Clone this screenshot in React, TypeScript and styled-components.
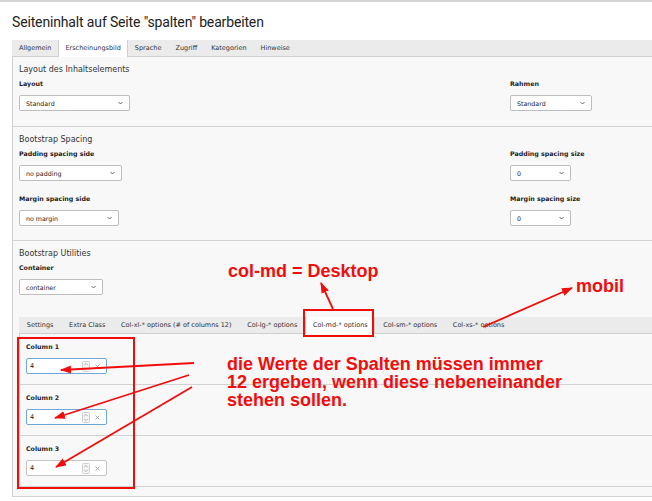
import React from "react";
import styled, { createGlobalStyle } from "styled-components";

const GlobalStyle = createGlobalStyle`
  html, body {
    margin: 0;
    padding: 0;
    background: #fff;
  }
  body {
    font-family: "DejaVu Sans", Verdana, sans-serif;
    color: #222;
  }
`;

const Page = styled.div`
  position: relative;
  width: 652px;
  height: 501px;
  overflow: hidden;
  background: #fff;
`;

const TopRule = styled.div`
  height: 2px;
  background: #d4d4d4;
`;

const Title = styled.h1`
  margin: 11px 0 9px 12px;
  font-family: Roboto, "Liberation Sans", sans-serif;
  font-size: 14px;
  letter-spacing: -0.15px;
  line-height: 18px;
  font-weight: 400;
  color: #222;
`;

const TabBar = styled.div<{ $inset?: boolean }>`
  display: flex;
  height: 17px;
  box-sizing: border-box;
  margin-left: ${p => (p.$inset ? "0" : "12px")};
  background: #ebebeb;
  border-bottom: 1px solid #cfcfcf;
`;

const Tab = styled.div<{ $active?: boolean; $pad?: number }>`
  padding: 0 ${p => p.$pad ?? 7}px;
  height: 17px;
  box-sizing: border-box;
  font-size: 6.5px;
  line-height: 16px;
  color: #333;
  white-space: nowrap;
  background: ${p => (p.$active ? "#fff" : "transparent")};
  box-shadow: ${p => (p.$active ? "inset 1px 0 #cfcfcf, inset -1px 0 #cfcfcf" : "none")};
`;

const Panel = styled.div`
  margin-left: 12px;
  border-left: 1px solid #cfcfcf;
  background: #f8f8f8;
`;

const Section = styled.div<{ $bottom?: number }>`
  padding: 8px 0 ${p => p.$bottom ?? 15}px 6px;
  border-bottom: 1px solid #d2d2d2;
`;

const SectionTitle = styled.div`
  font-size: 8px;
  line-height: 10px;
  margin-bottom: 4px;
  color: #333;
`;

const FieldGrid = styled.div`
  display: grid;
  grid-template-columns: 491px 1fr;
  row-gap: 13px;
`;

const Field = styled.div`
  display: flex;
  flex-direction: column;
  align-items: flex-start;
`;

const Label = styled.div`
  font-size: 6.3px;
  line-height: 9px;
  font-weight: 700;
  margin-bottom: 7px;
  color: #1e1e1e;
`;

const SelectBox = styled.div<{ $w: number }>`
  width: ${p => p.$w}px;
  height: 16px;
  box-sizing: border-box;
  display: flex;
  align-items: center;
  justify-content: space-between;
  padding: 0 6px;
  background: #fff;
  border: 1px solid #bdbdbd;
  border-radius: 2px;
  font-size: 6.3px;
  color: #222;
`;

const InnerTabs = styled.div`
  margin-top: 22px;
`;

const InnerPanel = styled.div`
  border-left: 1px solid #d2d2d2;
`;

const ColumnRow = styled.div`
  padding: 8px 0 10px 6px;
  border-bottom: 1px solid #d2d2d2;
`;

const NumberBox = styled.div<{ $focus?: boolean }>`
  width: 81px;
  height: 16px;
  box-sizing: border-box;
  display: flex;
  align-items: center;
  padding: 0 6px 0 3px;
  gap: 5px;
  background: #fff;
  border: 1px solid ${p => (p.$focus ? "#6ea7d8" : "#c4c4c4")};
  border-radius: 2px;
  font-size: 6.5px;
  color: #222;
`;

const NumberValue = styled.span`
  flex: 1;
`;

const RedText = styled.div<{ $x: number; $y: number }>`
  position: absolute;
  left: ${p => p.$x}px;
  top: ${p => p.$y}px;
  font-family: "Liberation Sans", Arial, sans-serif;
  font-weight: 700;
  font-size: 18px;
  line-height: 18px;
  color: #f20d0d;
  white-space: nowrap;
`;

const Overlay = styled.svg`
  position: absolute;
  left: 0;
  top: 0;
  pointer-events: none;
`;

function Chevron() {
  return (
    <svg width="5" height="4" viewBox="0 0 5 4">
      <polyline points="0.5,1 2.5,3 4.5,1" fill="none" stroke="#555" strokeWidth="0.9" />
    </svg>
  );
}

function Select({ value, width }: { value: string; width: number }) {
  return (
    <SelectBox $w={width}>
      <span>{value}</span>
      <Chevron />
    </SelectBox>
  );
}

function NumberInput({ value, focus }: { value: string; focus?: boolean }) {
  return (
    <NumberBox $focus={focus}>
      <NumberValue>{value}</NumberValue>
      <svg width="8" height="11" viewBox="0 0 8 11">
        <rect x="0.5" y="0.5" width="7" height="10" rx="1" fill="#f6f6f6" stroke="#d0d0d0" />
        <polyline points="2.2,4.2 4,2.4 5.8,4.2" fill="none" stroke="#999" strokeWidth="0.8" />
        <polyline points="2.2,6.8 4,8.6 5.8,6.8" fill="none" stroke="#999" strokeWidth="0.8" />
      </svg>
      <svg width="5" height="5" viewBox="0 0 5 5">
        <path d="M0.6 0.6 L4.4 4.4 M4.4 0.6 L0.6 4.4" stroke="#a0a0a0" strokeWidth="0.9" />
      </svg>
    </NumberBox>
  );
}

const topTabs = ["Allgemein", "Erscheinungsbild", "Sprache", "Zugriff", "Kategorien", "Hinweise"];
const colTabs = [
  "Settings",
  "Extra Class",
  "Col-xl-* options (# of columns 12)",
  "Col-lg-* options",
  "Col-md-* options",
  "Col-sm-* options",
  "Col-xs-* options",
];

const columns = [
  { name: "Column 1", value: "4", focus: true },
  { name: "Column 2", value: "4", focus: true },
  { name: "Column 3", value: "4", focus: false },
];

const arrows = [
  { x1: 333, y1: 309, x2: 321, y2: 283 },
  { x1: 483, y1: 327, x2: 572, y2: 288 },
  { x1: 194, y1: 363, x2: 61, y2: 370 },
  { x1: 189, y1: 375, x2: 55, y2: 418 },
  { x1: 192, y1: 387, x2: 56, y2: 467 },
];

export default function App() {
  return (
    <>
      <GlobalStyle />
      <Page>
        <TopRule />
        <Title>Seiteninhalt auf Seite "spalten" bearbeiten</Title>
        <TabBar>
          {topTabs.map(t => (
            <Tab key={t} $active={t === "Erscheinungsbild"}>
              {t}
            </Tab>
          ))}
        </TabBar>
        <Panel>
          <Section>
            <SectionTitle>Layout des Inhaltselements</SectionTitle>
            <FieldGrid>
              <Field>
                <Label>Layout</Label>
                <Select value="Standard" width={111} />
              </Field>
              <Field>
                <Label>Rahmen</Label>
                <Select value="Standard" width={82} />
              </Field>
            </FieldGrid>
          </Section>
          <Section $bottom={14}>
            <SectionTitle>Bootstrap Spacing</SectionTitle>
            <FieldGrid>
              <Field>
                <Label>Padding spacing side</Label>
                <Select value="no padding" width={103} />
              </Field>
              <Field>
                <Label>Padding spacing size</Label>
                <Select value="0" width={61} />
              </Field>
              <Field>
                <Label>Margin spacing side</Label>
                <Select value="no margin" width={100} />
              </Field>
              <Field>
                <Label>Margin spacing size</Label>
                <Select value="0" width={61} />
              </Field>
            </FieldGrid>
          </Section>
          <Section $bottom={9}>
            <SectionTitle>Bootstrap Utilities</SectionTitle>
            <Field>
              <Label>Container</Label>
              <Select value="container" width={84} />
            </Field>
            <InnerTabs>
              <TabBar $inset>
                {colTabs.map(t => (
                  <Tab key={t} $pad={7.8} $active={t === "Col-md-* options"}>
                    {t}
                  </Tab>
                ))}
              </TabBar>
              <InnerPanel>
                {columns.map(c => (
                  <ColumnRow key={c.name}>
                    <Label>{c.name}</Label>
                    <NumberInput value={c.value} focus={c.focus} />
                  </ColumnRow>
                ))}
              </InnerPanel>
            </InnerTabs>
          </Section>
        </Panel>

        <Overlay width="652" height="501" viewBox="0 0 652 501">
          <defs>
            <marker
              id="head"
              markerUnits="userSpaceOnUse"
              markerWidth="12"
              markerHeight="10"
              refX="10"
              refY="4"
              orient="auto"
            >
              <path d="M0 0 L11 4 L0 8 Z" fill="#f20d0d" />
            </marker>
          </defs>
          <rect x="304" y="310" width="69" height="26" fill="none" stroke="#f20d0d" strokeWidth="2" />
          <rect x="18" y="338" width="116" height="150" fill="none" stroke="#f20d0d" strokeWidth="2" />
          {arrows.map((a, i) => (
            <line
              key={i}
              x1={a.x1}
              y1={a.y1}
              x2={a.x2}
              y2={a.y2}
              stroke="#f20d0d"
              strokeWidth="1.8"
              markerEnd="url(#head)"
            />
          ))}
        </Overlay>
        <RedText $x={228} $y={262}>col-md = Desktop</RedText>
        <RedText $x={576} $y={277}>mobil</RedText>
        <RedText $x={227} $y={355}>
          die Werte der Spalten müssen immer
          <br />
          12 ergeben, wenn diese nebeneinander
          <br />
          stehen sollen.
        </RedText>
      </Page>
    </>
  );
}
